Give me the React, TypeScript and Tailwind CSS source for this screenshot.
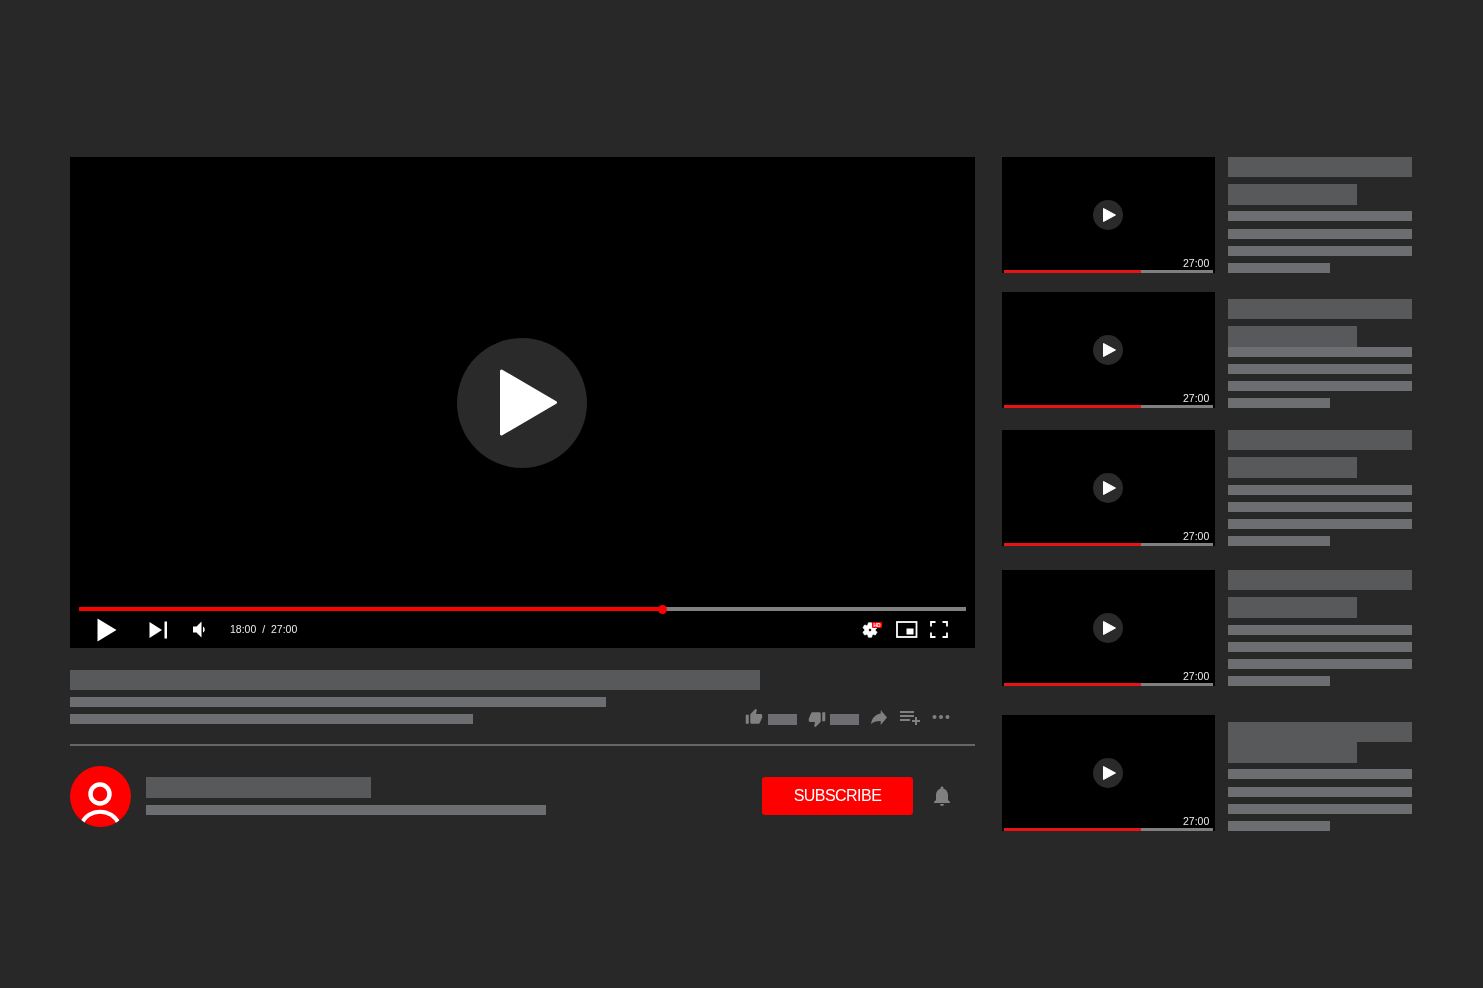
import React from "react";

const bars: { mt: string[]; mb: string }[] = [
  { mt: ["mt-0", "mt-[7px]", "mt-[6px]", "mt-[8px]", "mt-[7px]", "mt-[7px]"], mb: "mb-[19px]" },
  { mt: ["mt-[7px]", "mt-[7px]", "mt-0", "mt-[7px]", "mt-[7px]", "mt-[7px]"], mb: "mb-[22px]" },
  { mt: ["mt-0", "mt-[7px]", "mt-[7px]", "mt-[7px]", "mt-[7px]", "mt-[7px]"], mb: "mb-[24px]" },
  { mt: ["mt-0", "mt-[7px]", "mt-[7px]", "mt-[7px]", "mt-[7px]", "mt-[7px]"], mb: "mb-[29px]" },
  { mt: ["mt-[7px]", "mt-0", "mt-[6px]", "mt-[8px]", "mt-[7px]", "mt-[7px]"], mb: "mb-0" },
];

function ThumbRow({ mt, mb }: { mt: string[]; mb: string }) {
  return (
    <div className={`flex h-[116px] ${mb}`}>
      <div className="relative flex h-[116px] w-[213px] shrink-0 flex-col items-stretch justify-end bg-black px-[2px]">
        <div className="absolute inset-0 flex items-center justify-center">
          <div className="mr-[1px] flex h-[30px] w-[30px] items-center justify-center rounded-full bg-[#2a2a2a]">
            <svg width="16" height="16" viewBox="0 0 16 16" className="ml-[2px]">
              <path d="M2.5 1.5 L14.5 8 L2.5 14.5 Z" fill="#fff" stroke="#fff" strokeWidth="1" strokeLinejoin="round" />
            </svg>
          </div>
        </div>
        <div className="relative self-end pr-[4px] text-[10.5px] leading-[13px] text-[#ececec] [will-change:transform] [font-family:'Liberation_Sans',sans-serif]">
          27:00
        </div>
        <div className="flex h-[3px] bg-[#808080]">
          <div className="h-full w-[137px] bg-[#e61414]" />
        </div>
      </div>
      <div className="ml-[13px] w-[184px]">
        <div className={`h-[20px] w-[184px] bg-[#58595b] ${mt[0]}`} />
        <div className={`h-[21px] w-[129px] bg-[#58595b] ${mt[1]}`} />
        <div className={`h-[10px] w-[184px] bg-[#6d6e71] ${mt[2]}`} />
        <div className={`h-[10px] w-[184px] bg-[#6d6e71] ${mt[3]}`} />
        <div className={`h-[10px] w-[184px] bg-[#6d6e71] ${mt[4]}`} />
        <div className={`h-[10px] w-[102px] bg-[#6d6e71] ${mt[5]}`} />
      </div>
    </div>
  );
}

function Player() {
  return (
    <div className="relative flex h-[491px] w-[905px] flex-col justify-end bg-black px-[9px]">
      <div className="absolute inset-0 flex items-center justify-center">
        <div className="mr-[1px] flex h-[130px] w-[130px] items-center justify-center rounded-full bg-[#2a2a2a]">
          <svg width="60" height="70" viewBox="0 0 60 70" className="ml-[10px]">
            <path d="M4.5 3 L58.5 34.5 L4.5 66 Z" fill="#fff" stroke="#fff" strokeWidth="3" strokeLinejoin="round" />
          </svg>
        </div>
      </div>
      <div className="relative mb-[37px] flex h-[4px] w-[887px] items-center bg-[#808080]">
        <div className="h-full w-[583px] bg-[#ff0000]" />
        <div className="-ml-[4px] h-[9px] w-[9px] rounded-full bg-[#ff0000]" />
      </div>
      <div className="absolute inset-x-0 bottom-0 flex h-[38px] items-center px-[27px] text-white">
        <svg width="20" height="24" viewBox="0 0 20 24" className="mt-[1px]">
          <path d="M0.5 0.5 L19.5 12 L0.5 23.5 Z" fill="#fff" />
        </svg>
        <svg width="19" height="18" viewBox="0 0 19 18" className="ml-[32px] mt-[1px]">
          <path d="M0.5 1 L13 9 L0.5 17 Z" fill="#fff" />
          <rect x="15.5" y="0.5" width="2.5" height="17" fill="#fff" />
        </svg>
        <svg width="14" height="17" viewBox="0 0 14 17" className="ml-[25px] mt-[1px]">
          <path d="M0 5.5 H3.5 L8.5 0.5 V16.5 L3.5 11.5 H0 Z" fill="#fff" />
          <path d="M10 5.5 C12 6.5 12.5 10.5 10 11.5 Z" fill="#fff" />
        </svg>
        <span className="ml-[23px] mt-[1px] whitespace-pre text-[10.5px] leading-[13px] text-[#ececec] [will-change:transform] [word-spacing:3px] [font-family:'Liberation_Sans',sans-serif]">
          18:00 / 27:00
        </span>
        <div className="ml-auto flex items-center">
          <div className="relative h-[20px] w-[20px]">
            <svg width="18" height="18" viewBox="0 0 24 24" className="mt-[2px]">
              <path
                fill="#fff"
                stroke="#fff"
                strokeWidth="1"
                d="M19.14 12.94c.04-.3.06-.61.06-.94 0-.32-.02-.64-.07-.94l2.03-1.58c.18-.14.23-.41.12-.61l-1.92-3.32c-.12-.22-.37-.29-.59-.22l-2.39.96c-.5-.38-1.03-.7-1.62-.94l-.36-2.54c-.04-.24-.24-.41-.48-.41h-3.84c-.24 0-.43.17-.47.41l-.36 2.54c-.59.24-1.13.57-1.62.94l-2.39-.96c-.22-.08-.47 0-.59.22L2.74 8.87c-.12.21-.08.47.12.61l2.03 1.58c-.05.3-.09.63-.09.94s.02.64.07.94l-2.03 1.58c-.18.14-.23.41-.12.61l1.92 3.32c.12.22.37.29.59.22l2.39-.96c.5.38 1.03.7 1.62.94l.36 2.54c.05.24.24.41.48.41h3.84c.24 0 .44-.17.47-.41l.36-2.54c.59-.24 1.13-.56 1.62-.94l2.39.96c.22.08.47 0 .59-.22l1.92-3.32c.12-.22.07-.47-.12-.61l-2.01-1.58zM12 14c-1.1 0-2-.9-2-2s.9-2 2-2 2 .9 2 2-.9 2-2 2z"
              />
            </svg>
            <span className="absolute right-[-1px] top-[3px] flex h-[6px] w-[10px] items-center justify-center rounded-[1px] bg-[#ff0000] text-[5px] font-bold leading-none text-white [font-family:'Liberation_Sans',sans-serif]">
              HD
            </span>
          </div>
          <svg width="22" height="17" viewBox="0 0 22 17" className="ml-[15px]">
            <rect x="1" y="1" width="19.5" height="15" fill="none" stroke="#fff" strokeWidth="1.8" />
            <rect x="10.5" y="7.5" width="7" height="6" fill="#fff" />
          </svg>
          <svg width="18" height="17" viewBox="0 0 18 17" className="ml-[12px]">
            <path
              d="M1 5.5 V1 H5.5 M12.5 1 H17 V5.5 M17 11.5 V16 H12.5 M5.5 16 H1 V11.5"
              fill="none"
              stroke="#fff"
              strokeWidth="1.8"
            />
          </svg>
        </div>
      </div>
    </div>
  );
}

function Actions() {
  const g = "#808080";
  return (
    <div className="mt-[10px] flex h-[24px] items-start">
      <svg width="18" height="18" viewBox="0 0 24 24" className="mt-[1px]">
        <path
          fill={g}
          d="M1 21h4V9H1v12zm22-11c0-1.1-.9-2-2-2h-6.31l.95-4.57.03-.32c0-.41-.17-.79-.44-1.06L14.17 1 7.59 7.59C7.22 7.95 7 8.45 7 9v10c0 1.1.9 2 2 2h9c.83 0 1.54-.5 1.84-1.22l3.02-7.05c.09-.23.14-.47.14-.73v-2z"
        />
      </svg>
      <div className="ml-[5px] mt-[7px] h-[11px] w-[29px] bg-[#6d6e71]" />
      <svg width="18" height="18" viewBox="0 0 24 24" className="ml-[11px] mt-[3px]">
        <path
          fill={g}
          d="M15 3H6c-.83 0-1.54.5-1.84 1.22l-3.02 7.05c-.09.23-.14.47-.14.73v2c0 1.1.9 2 2 2h6.31l-.95 4.57-.03.32c0 .41.17.79.44 1.06L9.83 23l6.59-6.59c.36-.36.58-.86.58-1.41V5c0-1.1-.9-2-2-2zm4 0v12h4V3h-4z"
        />
      </svg>
      <div className="ml-[4px] mt-[7px] h-[11px] w-[29px] bg-[#6d6e71]" />
      <svg width="16" height="15" viewBox="0 0 16 15" className="ml-[12px] mt-[3px]">
        <path fill={g} d="M9.7 0 L16 7.5 L9.7 15 V11 C5 11 2 12 0 14 C1 8 4 4.5 9.7 3.5 Z" />
      </svg>
      <svg width="20" height="14" viewBox="0 0 20 14" className="ml-[13px] mt-[4px]">
        <path fill={g} d="M0 0h14v2H0zM0 4h14v2H0zM0 8h10v2H0zM15 6h2v3h3v2h-3v3h-2v-3h-3V9h3z" />
      </svg>
      <svg width="18" height="6" viewBox="0 0 18 6" className="ml-[12px] mt-[7px] mr-[25px]">
        <circle cx="2.5" cy="3" r="2" fill={g} />
        <circle cx="9" cy="3" r="2" fill={g} />
        <circle cx="15.5" cy="3" r="2" fill={g} />
      </svg>
    </div>
  );
}

export default function App() {
  return (
    <div className="flex h-[988px] w-full items-start gap-[27px] overflow-hidden bg-[#282828] pl-[70px] pt-[157px] [font-family:'Liberation_Sans',sans-serif]">
      <div className="w-[905px] shrink-0">
        <Player />
        <div className="mt-[22px] h-[20px] w-[690px] bg-[#58595b]" />
        <div className="mt-[7px] flex h-[27px] items-start justify-between">
          <div>
            <div className="h-[10px] w-[536px] bg-[#6d6e71]" />
            <div className="mt-[7px] h-[10px] w-[403px] bg-[#6d6e71]" />
          </div>
          <Actions />
        </div>
        <div className="mt-[20px] h-[2px] w-full bg-[#666666]" />
        <div className="mt-[20px] flex items-start">
          <div className="h-[61px] w-[61px] shrink-0 overflow-hidden rounded-full bg-[#ff0000]">
            <svg width="61" height="61" viewBox="0 0 61 61">
              <circle cx="30" cy="28" r="9.5" fill="none" stroke="#fff" strokeWidth="4.5" />
              <path d="M11.5 58 C18 41.5 42 41.5 49 58" fill="none" stroke="#fff" strokeWidth="4" />
            </svg>
          </div>
          <div className="ml-[15px] pt-[11px]">
            <div className="h-[21px] w-[225px] bg-[#58595b]" />
            <div className="mt-[7px] h-[10px] w-[400px] bg-[#6d6e71]" />
          </div>
          <button className="ml-auto mt-[11px] flex h-[38px] w-[151px] items-center justify-center rounded-[3px] bg-[#ff0000] text-[16px] leading-none tracking-[-0.55px] text-white [will-change:transform]">
            SUBSCRIBE
          </button>
          <svg width="24" height="24" viewBox="0 0 24 24" className="ml-[17px] mr-[21px] mt-[18px]">
            <path
              fill="#808080"
              d="M12 22c1.1 0 2-.9 2-2h-4c0 1.1.89 2 2 2zm6-6v-5c0-3.07-1.64-5.64-4.5-6.32V4c0-.83-.67-1.5-1.5-1.5s-1.5.67-1.5 1.5v.68C7.63 5.36 6 7.92 6 11v5l-2 2v1h16v-1l-2-2z"
            />
          </svg>
        </div>
      </div>
      <div className="w-[410px] shrink-0">
        {bars.map((b, i) => (
          <ThumbRow key={i} mt={b.mt} mb={b.mb} />
        ))}
      </div>
    </div>
  );
}
